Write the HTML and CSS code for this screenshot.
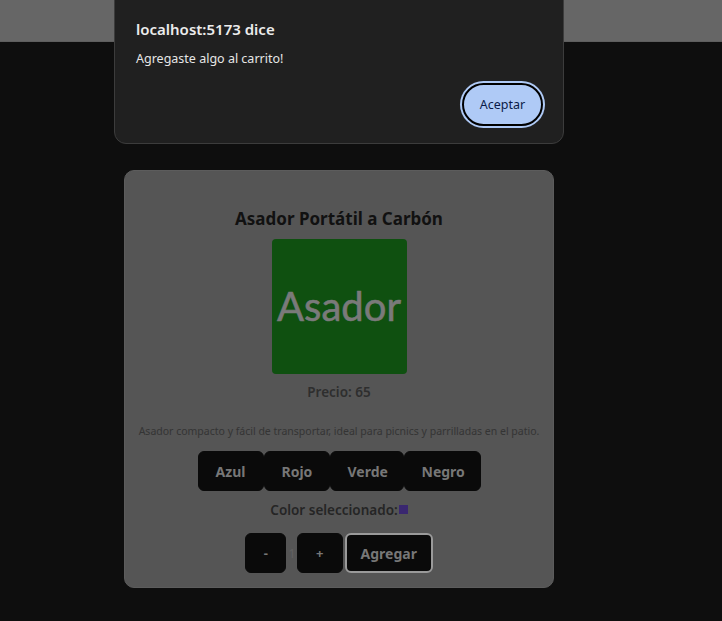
FILE: index.html
```html
<!DOCTYPE html>
<html lang="es">
<head>
<meta charset="utf-8">
<title>Asador</title>
<link rel="stylesheet" href="styles.css">
</head>
<body>
<header class="topbar"></header>
<main class="page">
  <section class="card">
    <h2 class="title">Asador Portátil a Carbón</h2>
    <div class="thumb"><span>Asador</span></div>
    <p class="price">Precio: 65</p>
    <p class="desc">Asador compacto y fácil de transportar, ideal para picnics y parrilladas en el patio.</p>
    <div class="colors">
      <button class="btn c-azul">Azul</button>
      <button class="btn c-rojo">Rojo</button>
      <button class="btn c-verde">Verde</button>
      <button class="btn c-negro">Negro</button>
    </div>
    <p class="selected">Color seleccionado:<span class="swatch"></span></p>
    <div class="qty">
      <button class="btn small">-</button>
      <span class="count">1</span>
      <button class="btn small plus">+</button>
      <button class="btn add">Agregar</button>
    </div>
  </section>
</main>
<div class="dialog">
  <h1 class="dlg-title">localhost:5173 dice</h1>
  <p class="dlg-msg">Agregaste algo al carrito!</p>
  <div class="dlg-actions"><button class="dlg-btn">Aceptar</button></div>
</div>
</body>
</html>
```
FILE: styles.css
```css
* { box-sizing: border-box; }
html, body { margin: 0; padding: 0; }
body {
  background: #0e0e0e;
  font-family: "Noto Sans", "Open Sans", sans-serif;
  width: 722px;
  height: 621px;
  overflow: hidden;
  position: relative;
}
.topbar {
  height: 42px;
  background: #666666;
  border-bottom: 1px solid #5e5e5e;
}
.page {
  padding-top: 128px;
  padding-left: 124px;
}
.card {
  width: 430px;
  height: 418px;
  background: #555555;
  border: 1px solid #5c5c5c;
  border-radius: 10px;
  display: flex;
  flex-direction: column;
  align-items: center;
  padding-top: 36px;
}
.title {
  margin: 0;
  font-size: 17px;
  font-weight: 700;
  color: #111111;
  line-height: 24px;
}
.thumb {
  margin-top: 8px;
  width: 135px;
  height: 135px;
  background: #0f5010;
  border-radius: 4px;
  display: flex;
  align-items: center;
  justify-content: center;
}
.thumb span {
  font-family: Lato, "Noto Sans", sans-serif;
  font-size: 40px;
  color: #7a7a7a;
  margin-top: -2px;
  -webkit-text-stroke: 0.6px #7a7a7a;
}
.price {
  margin: 9px 0 0;
  font-size: 13.5px;
  font-weight: 600;
  color: #2e2e2e;
  line-height: 18px;
}
.desc {
  margin: 22px 0 0;
  font-size: 10.5px;
  color: #343434;
  line-height: 16px;
}
.colors {
  display: flex;
  margin-top: 12px;
}
.btn {
  font-family: "Noto Sans", sans-serif;
  background: #0a0a0a;
  color: #777777;
  border: 1px solid #0a0a0a;
  border-radius: 6px;
  font-size: 14px;
  font-weight: 700;
  height: 40px;
  padding: 0 17px;
  cursor: pointer;
}
.c-azul { width: 66px; }
.c-rojo { width: 66px; }
.c-verde { width: 74px; }
.c-negro { width: 77px; }
.selected {
  margin: 9px 0 0;
  font-size: 13.5px;
  font-weight: 600;
  color: #252525;
  line-height: 20px;
  display: flex;
  align-items: center;
}
.swatch {
  display: inline-block;
  width: 9px;
  height: 9px;
  background: #3a2770;
  margin-left: 1px;
  margin-top: -2px;
}
.qty {
  display: flex;
  align-items: center;
  margin-top: 13px;
}
.btn.small { width: 41px; padding: 0; font-size: 13px; }
.btn.plus { width: 46px; margin-left: 1px; }
.count {
  font-size: 13px;
  color: #626262;
  margin-left: 2px;
}
.btn.add {
  width: 88px;
  padding: 0;
  margin-left: 2px;
  border: 2px solid #9a9a9a;
  box-shadow: inset 0 0 0 1px #0a0a0a;
}
.dialog {
  position: absolute;
  left: 114px;
  top: -12px;
  width: 450px;
  height: 156px;
  background: #202020;
  border: 1px solid #3c3c3c;
  border-radius: 12px;
  padding: 29px 20px 0 21px;
  font-family: "Noto Sans", "Open Sans", sans-serif;
}
.dlg-title {
  margin: 0;
  font-size: 15px;
  font-weight: 600;
  color: #ececec;
  line-height: 22px;
}
.dlg-msg {
  margin: 10px 0 0;
  font-size: 12.5px;
  color: #e6e6e6;
  line-height: 18px;
}
.dlg-actions {
  display: flex;
  justify-content: flex-end;
  margin-top: 15px;
}
.dlg-btn {
  width: 81px;
  height: 43px;
  border-radius: 22px;
  background: #afcaf6;
  color: #0b1b48;
  font-family: "Noto Sans", sans-serif;
  font-size: 12.5px;
  border: 2px solid #000000;
  box-shadow: 0 0 0 2px #afcaf6;
}
```
